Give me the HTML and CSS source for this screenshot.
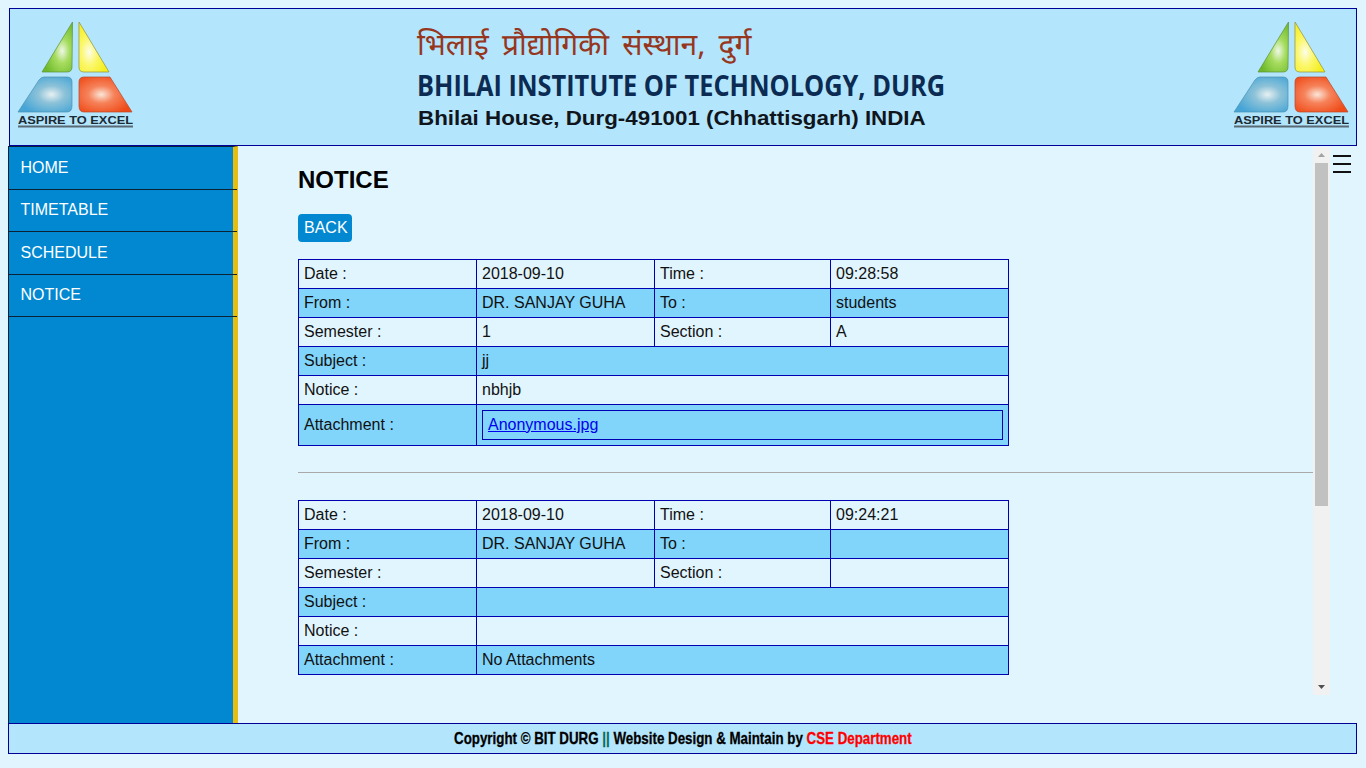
FILE: index.html
```html
<!DOCTYPE html>
<html lang="en">
<head>
    <meta charset="UTF-8">
    <meta name="viewport" content="width=device-width, initial-scale=1.0">
    <title>Notice</title>
    <link rel="stylesheet" href="styles.css">
</head>
<body>
    <svg class="defs" width="0" height="0">
        <defs>
            <radialGradient id="glowgreen" cx="0.66" cy="0.58" r="0.62">
                <stop offset="0" stop-color="#eef8e8"/>
                <stop offset="0.4" stop-color="#a6dc5e"/>
                <stop offset="1" stop-color="#6cb92a"/>
            </radialGradient>
            <radialGradient id="glowyellow" cx="0.34" cy="0.6" r="0.62">
                <stop offset="0" stop-color="#fdfde8"/>
                <stop offset="0.45" stop-color="#fbf76a"/>
                <stop offset="1" stop-color="#f5ee1c"/>
            </radialGradient>
            <radialGradient id="glowblue" cx="0.62" cy="0.5" r="0.62">
                <stop offset="0" stop-color="#e8f0f2"/>
                <stop offset="0.4" stop-color="#8cc2d8"/>
                <stop offset="1" stop-color="#45a5d6"/>
            </radialGradient>
            <radialGradient id="glowred" cx="0.42" cy="0.5" r="0.62">
                <stop offset="0" stop-color="#fbe6d8"/>
                <stop offset="0.4" stop-color="#f6825a"/>
                <stop offset="1" stop-color="#ef4a17"/>
            </radialGradient>
            <symbol id="bitlogo" viewBox="0 0 130 120">
                <path d="M64.5 7 L34 57 H59 Q64 57 64 52 Z" fill="url(#glowgreen)" stroke="#5f8f3a" stroke-width="0.7"/>
                <path d="M71 7 L101 57 H76 Q71 57 71 52 Z" fill="url(#glowyellow)" stroke="#8f8f3a" stroke-width="0.7"/>
                <path d="M10 97 L31 65 Q33 62 36 62 H59 Q64 62 64 67 V91 Q64 97 59 97 Z" fill="url(#glowblue)" stroke="#4f8fb0" stroke-width="0.7"/>
                <path d="M71 67 Q71 62 76 62 H102 L124 97 H76 Q71 97 71 91 Z" fill="url(#glowred)" stroke="#b8482a" stroke-width="0.7"/>
                <text class="logotext" x="10" y="108.5" textLength="115" lengthAdjust="spacingAndGlyphs">ASPIRE TO EXCEL</text>
                <rect x="10" y="110.5" width="115" height="2" fill="#5a6a74"/>
            </symbol>
        </defs>
    </svg>

    <div class="header">
        <svg class="logo" width="130" height="120"><use href="#bitlogo"/></svg>
        <div class="college">
            <div class="hindi">भिलाई प्रौद्योगिकी संस्थान, दुर्ग</div>
            <div class="english">BHILAI INSTITUTE OF TECHNOLOGY, DURG</div>
            <div class="address">Bhilai House, Durg-491001 (Chhattisgarh) INDIA</div>
        </div>
        <svg class="logo" width="130" height="120"><use href="#bitlogo"/></svg>
    </div>

    <div class="middle">
        <ul class="sidebar">
            <li><a href="#">HOME</a></li>
            <li><a href="#">TIMETABLE</a></li>
            <li><a href="#">SCHEDULE</a></li>
            <li><a href="#">NOTICE</a></li>
        </ul>
        <div class="content">
            <h2>NOTICE</h2>
            <a class="back" href="#">BACK</a>
            <table class="notice">
                <colgroup><col><col><col><col></colgroup>
                <tr><td>Date :</td><td>2018-09-10</td><td>Time :</td><td>09:28:58</td></tr>
                <tr class="alt"><td>From :</td><td>DR. SANJAY GUHA</td><td>To :</td><td>students</td></tr>
                <tr><td>Semester :</td><td>1</td><td>Section :</td><td>A</td></tr>
                <tr class="alt"><td>Subject :</td><td colspan="3">jj</td></tr>
                <tr><td>Notice :</td><td colspan="3">nbhjb</td></tr>
                <tr class="alt"><td>Attachment :</td><td colspan="3"><div class="file"><a href="#">Anonymous.jpg</a></div></td></tr>
            </table>
            <hr>
            <table class="notice">
                <colgroup><col><col><col><col></colgroup>
                <tr><td>Date :</td><td>2018-09-10</td><td>Time :</td><td>09:24:21</td></tr>
                <tr class="alt"><td>From :</td><td>DR. SANJAY GUHA</td><td>To :</td><td></td></tr>
                <tr><td>Semester :</td><td></td><td>Section :</td><td></td></tr>
                <tr class="alt"><td>Subject :</td><td colspan="3"></td></tr>
                <tr><td>Notice :</td><td colspan="3"></td></tr>
                <tr class="alt"><td>Attachment :</td><td colspan="3">No Attachments</td></tr>
            </table>
        </div>
        <div class="scrollbar">
            <div class="arrow"><svg width="7" height="4" viewBox="0 0 7 4"><path d="M3.5 0L7 4H0Z" fill="#a3a3a3"/></svg></div>
            <div class="thumb"></div>
            <div class="arrow low"><svg width="7" height="4" viewBox="0 0 7 4"><path d="M0 0H7L3.5 4Z" fill="#505050"/></svg></div>
        </div>
        <svg class="menu" width="18" height="18" viewBox="0 0 18 18">
            <path d="M0 1h18M0 9h18M0 17h18" stroke="#111" stroke-width="2"/>
        </svg>
    </div>

    <div class="footer"><span class="footertext">Copyright © BIT DURG <span class="bars">||</span> Website Design &amp; Maintain by <span class="dept">CSE Department</span></span></div>
</body>
</html>
```

FILE: styles.css
```css
html,body{
    height:100%;
}
body{
    margin:0;
    padding:8px 9px 8px 8px;
    box-sizing:border-box;
    background-color:#e1f5fe;
    font-family:"Liberation Sans",Arial,sans-serif;
    font-size:16px;
    color:#111;
}
.defs{
    display:block;
    height:0;
}

.header{
    display:flex;
    margin-left:1px;
    height:136px;
    background-color:#b3e5fc;
    border:1px solid #000099;
    overflow:hidden;
}
.logo{
    flex:none;
    margin:6px 2px 0 -2px;
}
.logo:last-child{
    margin-left:0;
}
.college{
    flex:1;
    padding:19px 0 0 277px;
}
.hindi{
    height:40px;
    font-family:"Noto Sans Devanagari","Noto Sans","DejaVu Sans",sans-serif;
    font-size:30px;
    word-spacing:5.5px;
    line-height:40px;
    color:#96361c;
}
.english{
    font-family:"Open Sans",sans-serif;
    font-weight:700;
    font-size:28px;
    line-height:34px;
    color:#0c2b52;
    white-space:nowrap;
    transform:scaleX(.905);
    transform-origin:left;
}
.address{
    margin:4px 0 0 1px;
    font-weight:700;
    font-size:20px;
    line-height:24px;
    color:#10151c;
    white-space:nowrap;
    transform:scaleX(1.117);
    transform-origin:left;
}
.logotext{
    font-family:"Liberation Sans",sans-serif;
    font-weight:700;
    font-size:11px;
    fill:#1c2a34;
}

.middle{
    display:flex;
    height:577px;
}
.sidebar{
    flex:none;
    width:224px;
    margin:0;
    padding:.6px 0 0;
    list-style:none;
    background-color:#0288d1;
    border-left:1px solid #06213a;
    border-top:1px solid #06213a;
    border-right:5px solid #e6be12;
}
.sidebar li{
    margin-right:-4px;
    height:41.33px;
    border-bottom:1px solid #0a2233;
}
.sidebar a{
    display:block;
    padding:11.5px 12px 0 11.5px;
    color:#fff;
    text-decoration:none;
}

.content{
    flex:1;
    min-width:0;
    height:549px;
    margin-top:1px;
    padding:19px 0 0 60px;
    box-sizing:border-box;
    overflow:hidden;
}
.content h2{
    margin:0 0 20px;
    font-size:24px;
    line-height:28px;
    color:#000;
}
.back{
    display:inline-block;
    padding:5px 4px 5px 6px;
    background-color:#0288d1;
    border-radius:4px;
    color:#fff;
    text-decoration:none;
}
.notice{
    margin-top:17px;
    width:710px;
    table-layout:fixed;
    border-collapse:collapse;
}
.notice col{
    width:178px;
}
.notice col:nth-child(3){
    width:176px;
}
.notice td{
    border:1px solid #0000b3;
    padding:5px;
    line-height:18px;
}
.alt{
    background-color:#81d4fa;
}
.file{
    padding:5px;
    border:1px solid #0000b3;
    height:18px;
}
.file a{
    color:#0000ee;
}
hr{
    margin:26px 0 27px;
    height:0;
    border:0;
    border-top:1px solid #a9a9a9;
}

.scrollbar{
    flex:none;
    display:flex;
    flex-direction:column;
    width:17px;
    height:548px;
    margin-top:1px;
    background-color:#f1f1f1;
}
.arrow{
    display:flex;
    align-items:center;
    justify-content:center;
    height:16px;
}
.arrow.low{
    margin-top:auto;
}
.thumb{
    height:343px;
    margin:0 2px;
    background-color:#c1c1c1;
}

.menu{
    flex:none;
    margin:9px 6px 0 3px;
}

.footer{
    height:29px;
    background-color:#b3e5fc;
    border:1px solid #000099;
    text-align:center;
    overflow:hidden;
}
.footertext{
    display:inline-block;
    font-weight:700;
    font-size:17px;
    line-height:29px;
    white-space:nowrap;
    color:#000;
    -webkit-text-stroke:.3px currentColor;
    transform:scaleX(.784);
}
.bars{
    color:#0a6a5a;
}
.dept{
    color:#ff0000;
}
```
